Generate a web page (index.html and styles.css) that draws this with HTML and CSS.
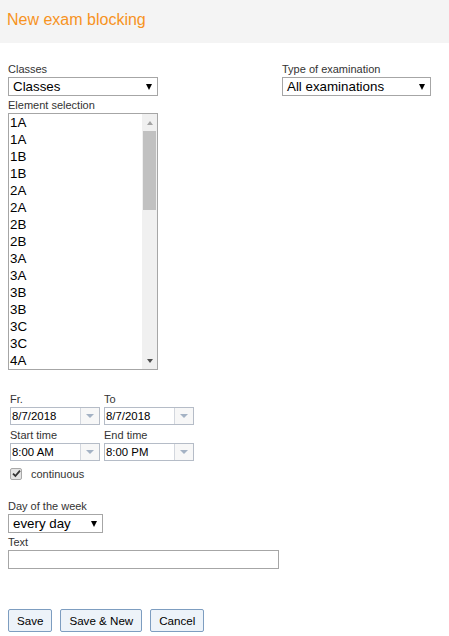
FILE: index.html
```html
<!DOCTYPE html>
<html lang="en">
<head>
    <meta charset="UTF-8">
    <meta name="viewport" content="width=device-width, initial-scale=1">
    <title>New exam blocking</title>
    <link rel="stylesheet" href="styles.css">
</head>
<body>
<header class="page-header">
    <h1>New exam blocking</h1>
</header>

<form class="blocking-form" onsubmit="return false">
    <div class="top-row">
        <div class="col col-classes">
            <label class="field-label">Classes</label>
            <div class="dropdown"><span>Classes</span><i class="caret"></i></div>

            <label class="field-label">Element selection</label>
            <div class="listbox">
                <ul class="listbox-items">
                    <li>1A</li>
                    <li>1A</li>
                    <li>1B</li>
                    <li>1B</li>
                    <li>2A</li>
                    <li>2A</li>
                    <li>2B</li>
                    <li>2B</li>
                    <li>3A</li>
                    <li>3A</li>
                    <li>3B</li>
                    <li>3B</li>
                    <li>3C</li>
                    <li>3C</li>
                    <li>4A</li>
                </ul>
                <!-- fake scrollbar, the list is clipped -->
                <div class="scrollbar">
                    <span class="scroll-btn"><i class="arrow-up"></i></span>
                    <span class="scroll-track"><span class="scroll-thumb"></span></span>
                    <span class="scroll-btn"><i class="arrow-down"></i></span>
                </div>
            </div>
        </div>

        <div class="col col-type">
            <label class="field-label">Type of examination</label>
            <div class="dropdown"><span>All examinations</span><i class="caret"></i></div>
        </div>
    </div>

    <!-- Period -->
    <div class="period-grid">
        <div class="period-field">
            <label class="field-label">Fr.</label>
            <div class="combo"><span class="combo-value">8/7/2018</span><span class="combo-btn"><i></i></span></div>
        </div>
        <div class="period-field">
            <label class="field-label">To</label>
            <div class="combo"><span class="combo-value">8/7/2018</span><span class="combo-btn"><i></i></span></div>
        </div>
        <div class="period-field">
            <label class="field-label">Start time</label>
            <div class="combo"><span class="combo-value">8:00 AM</span><span class="combo-btn"><i></i></span></div>
        </div>
        <div class="period-field">
            <label class="field-label">End time</label>
            <div class="combo"><span class="combo-value">8:00 PM</span><span class="combo-btn"><i></i></span></div>
        </div>
    </div>

    <label class="check-row">
        <span class="checkbox">
            <svg width="9" height="9" viewBox="0 0 9 9"><path d="M1 4.6 L3.4 7 L8 1.6" fill="none" stroke="#333" stroke-width="1.8"/></svg>
        </span>
        continuous
    </label>

    <label class="field-label day-label">Day of the week</label>
    <div class="dropdown dropdown-day"><span>every day</span><i class="caret"></i></div>

    <label class="field-label">Text</label>
    <input class="text-input" type="text">

    <div class="actions">
        <button type="button">Save</button>
        <button type="button">Save &amp; New</button>
        <button type="button">Cancel</button>
    </div>
</form>
</body>
</html>
```

FILE: styles.css
```css
:root {
    --title-color: #f7931e;
    --label-color: #333;
    --field-border: #a6a6a6;
    --combo-border: #b5bcc7;
    --button-border: #7d9dc0;
    --button-bg: #edf3f9;
}

body {
    margin: 0;
    font-family: "Liberation Sans", Arial, sans-serif;
    color: #000;
    background: #fff;
}

/* Header */
.page-header {
    height: 43px;
    box-sizing: border-box;
    padding: 11px 7px 0;
    background-color: #f4f4f4;
}

.page-header h1 {
    margin: 0;
    font-size: 16px;
    line-height: 18px;
    font-weight: normal;
    color: var(--title-color);
}

.blocking-form {
    padding: 18px 8px 0;
}

.field-label {
    display: block;
    font-size: 11px;
    line-height: 16px;
    color: var(--label-color);
}

/* Select boxes */
.top-row {
    display: flex;
}

.col-classes {
    width: 150px;
}

.col-type {
    width: 149px;
    margin-left: 124px;
}

.dropdown {
    display: flex;
    align-items: center;
    justify-content: space-between;
    height: 19px;
    box-sizing: border-box;
    padding: 0 5px 0 4px;
    margin-bottom: 1px;
    border: 1px solid var(--field-border);
    font-size: 13.33px;
    background: #fff;
}

.caret {
    width: 0;
    height: 0;
    border-left: 3px solid transparent;
    border-right: 3px solid transparent;
    border-top: 6px solid #000;
}

.dropdown-day {
    width: 95px;
}

/* Element list */
.listbox {
    display: flex;
    height: 257px;
    box-sizing: border-box;
    border: 1px solid var(--field-border);
    overflow: hidden;
}

.listbox-items {
    flex: 1;
    margin: 0;
    padding: 0;
    list-style: none;
}

.listbox-items li {
    padding-left: 1px;
    font-size: 13.33px;
    line-height: 17px;
}

.scrollbar {
    display: flex;
    flex-direction: column;
    width: 15px;
    background-color: #f0f0f0;
}

.scroll-btn {
    display: flex;
    align-items: center;
    justify-content: center;
    height: 17px;
}

.scroll-track {
    flex: 1;
    padding: 0 1px;
}

.scroll-thumb {
    display: block;
    height: 79px;
    background-color: #c1c1c1;
}

.arrow-up,
.arrow-down {
    width: 0;
    height: 0;
    border-left: 3.5px solid transparent;
    border-right: 3.5px solid transparent;
}

.arrow-up {
    border-bottom: 4px solid #a3a3a3;
}

.arrow-down {
    border-top: 4px solid #505050;
}

/* Dates and times */
.period-grid {
    display: grid;
    grid-template-columns: 90px 90px;
    column-gap: 4px;
    row-gap: 2px;
    margin-top: 21px;
    padding-left: 2px;
}

.combo {
    display: flex;
    height: 18px;
    box-sizing: border-box;
    border: 1px solid var(--combo-border);
    background: #fff;
}

.combo-value {
    flex: 1;
    padding-left: 1px;
    font-size: 11.4px;
    line-height: 16px;
}

.combo-btn {
    display: flex;
    align-items: center;
    justify-content: center;
    width: 18px;
    border-left: 1px solid #d3d7de;
    background-color: #f7f7f7;
}

.combo-btn i {
    width: 0;
    height: 0;
    border-left: 4px solid transparent;
    border-right: 4px solid transparent;
    border-top: 4px solid #a4b2c4;
}

.check-row {
    display: flex;
    align-items: center;
    gap: 9px;
    height: 13px;
    margin-top: 6px;
    padding-left: 2px;
    font-size: 11px;
    color: var(--label-color);
}

.checkbox {
    display: flex;
    align-items: center;
    justify-content: center;
    width: 12px;
    height: 12px;
    box-sizing: border-box;
    border: 1px solid #a8a8a8;
    border-radius: 2px;
    background-color: #e4e4e4;
}

.day-label {
    margin-top: 18px;
}

.text-input {
    display: block;
    width: 271px;
    height: 19px;
    box-sizing: border-box;
    margin: 0;
    border: 1px solid var(--field-border);
    padding: 0 3px;
    font: 13px "Liberation Sans", Arial, sans-serif;
}

/* Buttons */
.actions {
    display: flex;
    gap: 8px;
    margin-top: 40px;
}

.actions button {
    height: 23px;
    padding: 0 8px;
    border: 1px solid var(--button-border);
    border-radius: 2px;
    background-color: var(--button-bg);
    font-family: "Liberation Sans", Arial, sans-serif;
    font-size: 11.6px;
    color: #000;
    cursor: pointer;
}

.actions button:hover {
    background-color: #dde9f6;
}
```
